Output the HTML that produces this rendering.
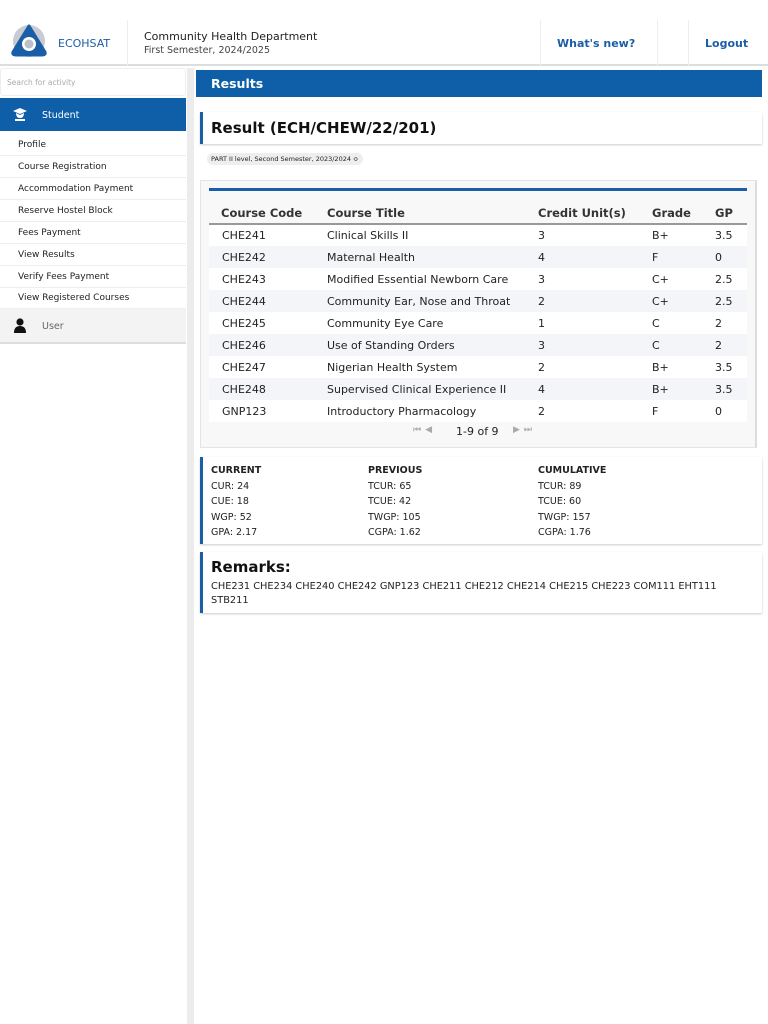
<!DOCTYPE html>
<html><head><meta charset="utf-8"><style>
*{box-sizing:border-box;margin:0;padding:0}
body{width:768px;height:1024px;background:#fff;font-family:"DejaVu Sans",Verdana,sans-serif;color:#222;position:relative;overflow:hidden}
.a{position:absolute}
.hdr{left:0;top:0;width:768px;height:66px;background:#fff;border-bottom:2px solid #ddd}
.vl{width:1px;background:#eee;top:20px;height:46px}
.side{left:0;top:68px;width:187px;height:956px;background:#fff}
.gut{left:187px;top:68px;width:7px;height:956px;background:#ececec}
.nav{font-size:9px;color:#222;height:22px;line-height:22px;padding-left:18px;border-bottom:1px solid #eee;width:186px}
table{border-collapse:collapse;font-size:11px}
td,th{height:22px;text-align:left;white-space:nowrap}
th{font-weight:bold;color:#333;border-bottom:2px solid #999;height:22px;font-size:11.5px}
tr.z td{background:#f3f5f8}
td{background:#fff}
.stat{font-size:9.5px;line-height:15.5px}
.stat b{font-size:9.5px;font-weight:900}
</style></head><body>
<div class="a hdr"></div>
<svg class="a" style="left:10px;top:24px" width="38" height="34" viewBox="0 0 38 34">
<circle cx="19" cy="17" r="16" fill="#c8ccd2"/>
<path d="M19 2 L35 28 Q36 31 32 31 L6 31 Q2 31 3 28 Z" fill="#1a5ea8" stroke="#1a5ea8" stroke-width="3" stroke-linejoin="round"/>
<circle cx="19" cy="20" r="7" fill="#fff"/><circle cx="19" cy="20" r="4.5" fill="#b9c0c8"/>
</svg>
<div class="a" style="left:58px;top:37px;font-size:11px;color:#1a5ea8">ECOHSAT</div>
<div class="a vl" style="left:127px"></div>
<div class="a" style="left:144px;top:30px;font-size:11px;color:#222">Community Health Department</div>
<div class="a" style="left:144px;top:45px;font-size:9.5px;color:#444">First Semester, 2024/2025</div>
<div class="a vl" style="left:540px"></div>
<div class="a vl" style="left:657px"></div>
<div class="a vl" style="left:688px"></div>
<div class="a" style="left:557px;top:37px;font-size:11px;font-weight:900;color:#1a5ea8">What's new?</div>
<div class="a" style="left:705px;top:37px;font-size:11px;font-weight:900;color:#1a5ea8">Logout</div>

<div class="a side">
<div style="height:28px;border:1px solid #eee;border-radius:3px;font-size:7.5px;color:#aaa;padding:9px 0 0 6px;width:186px">Search for activity</div>
<div style="margin-top:2px;height:33px;background:#0f5fa8;color:#fff;font-size:9.5px;line-height:36px;padding-left:42px;position:relative;width:186px">
<svg style="position:absolute;left:13px;top:10px" width="14" height="14" viewBox="0 0 14 14"><path d="M7 0 L14 3 L7 6 L0 3Z" fill="#fff"/><path d="M3 5 Q3 10 7 10 Q11 10 11 5 L7 7Z" fill="#fff"/><rect x="2" y="11" width="10" height="2" fill="#fff"/></svg>Student</div>
<div style="height:3px"></div>
<div class="nav">Profile</div>
<div class="nav">Course Registration</div>
<div class="nav">Accommodation Payment</div>
<div class="nav">Reserve Hostel Block</div>
<div class="nav">Fees Payment</div>
<div class="nav">View Results</div>
<div class="nav">Verify Fees Payment</div>
<div class="nav" style="height:21px;line-height:20px">View Registered Courses</div>
<div style="height:35px;background:#f3f3f3;border-bottom:2px solid #ddd;font-size:9.5px;color:#666;line-height:36px;padding-left:42px;position:relative;width:186px">
<svg style="position:absolute;left:13px;top:9px" width="14" height="15" viewBox="0 0 14 15"><circle cx="7" cy="4" r="3.6" fill="#111"/><path d="M1 15 Q1 8 7 8 Q13 8 13 15Z" fill="#111"/></svg>User</div>
</div>
<div class="a gut"></div>

<div class="a" style="left:196px;top:70px;width:566px;height:27px;background:#0f5fa8;color:#fff;font-size:12.5px;font-weight:bold;line-height:27px;padding-left:15px">Results</div>

<div class="a" style="left:200px;top:112px;width:562px;height:32px;border-left:3px solid #1a5ea8;box-shadow:0 1px 2px #ccc;background:#fff"></div>
<div class="a" style="left:211px;top:119px;font-size:15px;font-weight:bold;color:#111">Result (ECH/CHEW/22/201)</div>
<div class="a" style="left:207px;top:153px;height:12px;padding:0 4px;border-radius:6px;background:#eee;font-size:6.5px;line-height:12px">PART II level, Second Semester, 2023/2024 ≎</div>

<div class="a" style="left:200px;top:180px;width:557px;height:268px;background:#f8f8f8;border:1px solid #e4e4e4;border-right:2px solid #ddd"></div>
<div class="a" style="left:209px;top:188px;width:538px;height:3px;background:#1a5ea8"></div>
<table class="a" style="left:209px;top:202px;width:538px">
<tr><th style="padding-left:12px;width:118px">Course Code</th><th style="width:211px">Course Title</th><th style="width:114px">Credit Unit(s)</th><th style="width:63px">Grade</th><th>GP</th></tr>
<tr><td style="padding-left:13px">CHE241</td><td>Clinical Skills II</td><td>3</td><td>B+</td><td>3.5</td></tr>
<tr class="z"><td style="padding-left:13px">CHE242</td><td>Maternal Health</td><td>4</td><td>F</td><td>0</td></tr>
<tr><td style="padding-left:13px">CHE243</td><td>Modified Essential Newborn Care</td><td>3</td><td>C+</td><td>2.5</td></tr>
<tr class="z"><td style="padding-left:13px">CHE244</td><td>Community Ear, Nose and Throat</td><td>2</td><td>C+</td><td>2.5</td></tr>
<tr><td style="padding-left:13px">CHE245</td><td>Community Eye Care</td><td>1</td><td>C</td><td>2</td></tr>
<tr class="z"><td style="padding-left:13px">CHE246</td><td>Use of Standing Orders</td><td>3</td><td>C</td><td>2</td></tr>
<tr><td style="padding-left:13px">CHE247</td><td>Nigerian Health System</td><td>2</td><td>B+</td><td>3.5</td></tr>
<tr class="z"><td style="padding-left:13px">CHE248</td><td>Supervised Clinical Experience II</td><td>4</td><td>B+</td><td>3.5</td></tr>
<tr><td style="padding-left:13px">GNP123</td><td>Introductory Pharmacology</td><td>2</td><td>F</td><td>0</td></tr>
</table>
<div class="a" style="left:413px;top:425px;font-size:9px;color:#aaa;letter-spacing:4px">⏮◀</div>
<div class="a" style="left:456px;top:425px;font-size:11px;color:#222">1-9 of 9</div>
<div class="a" style="left:513px;top:425px;font-size:9px;color:#aaa;letter-spacing:4px">▶⏭</div>

<div class="a" style="left:200px;top:457px;width:562px;height:87px;border-left:3px solid #1a5ea8;box-shadow:0 1px 2px #ccc;background:#fff"></div>
<div class="a stat" style="left:211px;top:463px"><b>CURRENT</b><br>CUR: 24<br>CUE: 18<br>WGP: 52<br>GPA: 2.17</div>
<div class="a stat" style="left:368px;top:463px"><b>PREVIOUS</b><br>TCUR: 65<br>TCUE: 42<br>TWGP: 105<br>CGPA: 1.62</div>
<div class="a stat" style="left:538px;top:463px"><b>CUMULATIVE</b><br>TCUR: 89<br>TCUE: 60<br>TWGP: 157<br>CGPA: 1.76</div>

<div class="a" style="left:200px;top:552px;width:562px;height:61px;border-left:3px solid #1a5ea8;box-shadow:0 1px 2px #ccc;background:#fff"></div>
<div class="a" style="left:211px;top:558px;font-size:15px;font-weight:bold;color:#111">Remarks:</div>
<div class="a" style="left:211px;top:580px;width:530px;font-size:9.8px;line-height:14px">CHE231 CHE234 CHE240 CHE242 GNP123 CHE211 CHE212 CHE214 CHE215 CHE223 COM111 EHT111 STB211</div>
</body></html>
